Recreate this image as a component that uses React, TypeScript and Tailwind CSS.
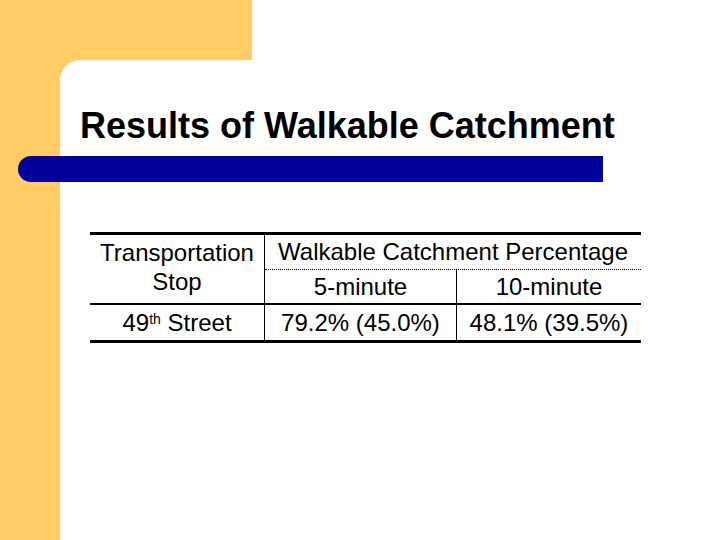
export default function App() {
  return (
    <div className="w-[720px] h-[540px] flex flex-col bg-white font-['Liberation_Sans',Arial,sans-serif] text-black overflow-hidden">
      <div className="h-[60px] flex">
        <div className="w-[252px] bg-[#FFCC66]" />
        <div className="flex-1 bg-white" />
      </div>
      <div className="flex-1 flex bg-[#FFCC66]">
        <div className="w-[60px]" />
        <div className="flex-1 bg-white rounded-tl-[20px] pt-[46px]">
          <h1 className="pl-[20px] text-[36px] leading-[40px] font-bold">Results of Walkable Catchment</h1>
          <div className="mt-[10px] ml-[-42px] w-[585px] h-[26px] bg-[#000099] rounded-l-full" />

          <div className="mt-[50px] ml-[30px] w-[551px] border-t-[3px] border-b-[3px] border-black text-[24px]">
            <div className="flex border-b-2 border-black">
              <div className="w-[175px] border-r border-black pt-[3px] leading-[29px] text-center">
                Transportation
                <br />
                Stop
              </div>
              <div className="flex-1 flex flex-col">
                <div className="h-[35px] border-b border-dotted border-black flex items-center justify-center">
                  Walkable Catchment Percentage
                </div>
                <div className="h-[33px] flex">
                  <div className="w-[191px] flex items-center justify-center">5-minute</div>
                  <div className="flex-1 border-l border-black flex items-center justify-center">10-minute</div>
                </div>
              </div>
            </div>
            <div className="h-[35px] flex">
              <div className="w-[175px] border-r border-black flex items-center justify-center">
                <span>
                  49<sup className="text-[14px]">th</sup> Street
                </span>
              </div>
              <div className="w-[191px] flex items-center justify-center">79.2% (45.0%)</div>
              <div className="flex-1 border-l border-black flex items-center justify-center">48.1% (39.5%)</div>
            </div>
          </div>
        </div>
      </div>
    </div>
  );
}
